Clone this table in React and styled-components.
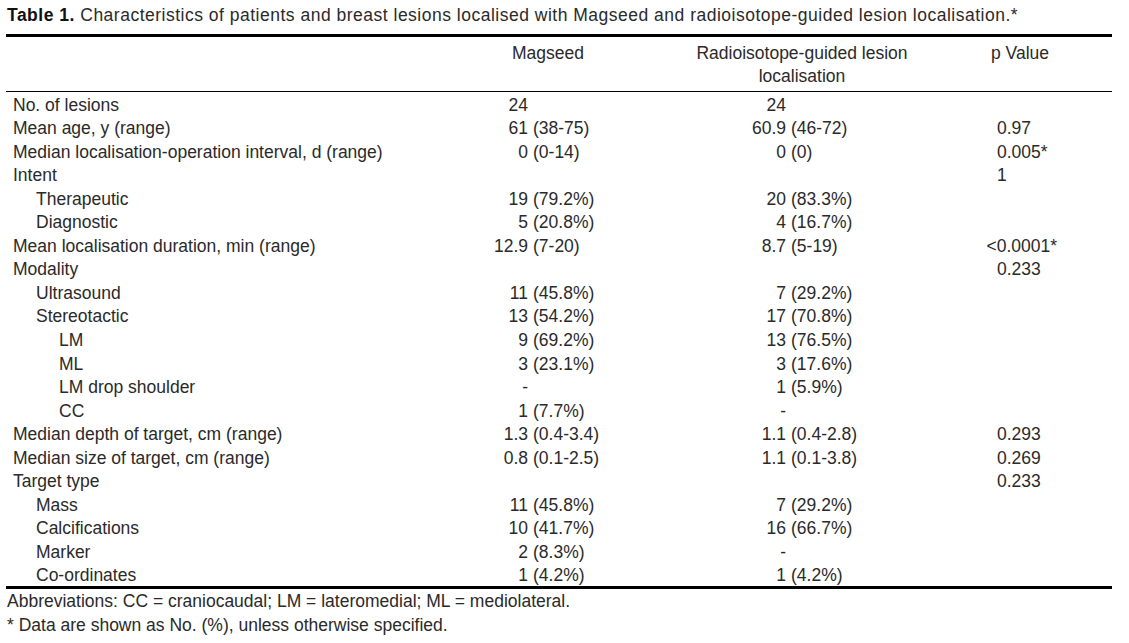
import React from "react";
import styled, { createGlobalStyle } from "styled-components";

const GlobalStyle = createGlobalStyle`
  html, body {
    margin: 0;
    padding: 0;
    background: #ffffff;
  }
  body {
    font-family: "Liberation Sans", Arial, sans-serif;
    color: #2a2a2a;
  }
`;

const Page = styled.div`
  width: 1106px;
  padding: 4px 0 0 6px;
  font-size: 17.5px;
`;

const Caption = styled.div`
  line-height: 23.5px;
  padding-left: 1px;
  margin-bottom: 6px;
  white-space: nowrap;
  letter-spacing: 0.5px;
  b {
    font-weight: 700;
    color: #111;
  }
`;

const Table = styled.div`
  border-top: 3px solid #000;
  border-bottom: 3px solid #000;
`;

const Row = styled.div`
  display: grid;
  grid-template-columns: 484px 192px 240px 190px;
  box-sizing: border-box;
  height: 23.55px;
  padding-top: 1.5px;
  line-height: 22px;
  white-space: nowrap;
`;

const Head = styled(Row)`
  height: auto;
  line-height: 23px;
  padding: 5px 0 3.5px;
  border-bottom: 1px solid #000;
`;

const HeadCell = styled.div`
  text-align: ${({ $align }) => $align || "left"};
  padding-left: ${({ $pad }) => $pad || 0}px;
`;

const Label = styled.div`
  padding-left: ${({ $level }) => 7 + $level * 23}px;
`;

const Value = styled.div`
  display: flex;
`;

const Num = styled.span`
  display: inline-block;
  width: ${({ $w }) => $w}px;
  text-align: right;
  flex: none;
`;

const Rest = styled.span`
  padding-left: 5px;
`;

const PCell = styled.div`
  padding-left: 75px;
`;

const Hang = styled.span`
  margin-left: -10.5px;
`;

const Notes = styled.div`
  line-height: 23.4px;
  padding: 1px 0 0 1px;
`;

const rows = [
  { label: "No. of lesions", level: 0, a: ["24"], b: ["24"] },
  { label: "Mean age, y (range)", level: 0, a: ["61", "(38-75)"], b: ["60.9", "(46-72)"], p: "0.97" },
  { label: "Median localisation-operation interval, d (range)", level: 0, a: ["0", "(0-14)"], b: ["0", "(0)"], p: "0.005*" },
  { label: "Intent", level: 0, p: "1" },
  { label: "Therapeutic", level: 1, a: ["19", "(79.2%)"], b: ["20", "(83.3%)"] },
  { label: "Diagnostic", level: 1, a: ["5", "(20.8%)"], b: ["4", "(16.7%)"] },
  { label: "Mean localisation duration, min (range)", level: 0, a: ["12.9", "(7-20)"], b: ["8.7", "(5-19)"], p: "<0.0001*", hang: true },
  { label: "Modality", level: 0, p: "0.233" },
  { label: "Ultrasound", level: 1, a: ["11", "(45.8%)"], b: ["7", "(29.2%)"] },
  { label: "Stereotactic", level: 1, a: ["13", "(54.2%)"], b: ["17", "(70.8%)"] },
  { label: "LM", level: 2, a: ["9", "(69.2%)"], b: ["13", "(76.5%)"] },
  { label: "ML", level: 2, a: ["3", "(23.1%)"], b: ["3", "(17.6%)"] },
  { label: "LM drop shoulder", level: 2, a: ["-"], b: ["1", "(5.9%)"] },
  { label: "CC", level: 2, a: ["1", "(7.7%)"], b: ["-"] },
  { label: "Median depth of target, cm (range)", level: 0, a: ["1.3", "(0.4-3.4)"], b: ["1.1", "(0.4-2.8)"], p: "0.293" },
  { label: "Median size of target, cm (range)", level: 0, a: ["0.8", "(0.1-2.5)"], b: ["1.1", "(0.1-3.8)"], p: "0.269" },
  { label: "Target type", level: 0, p: "0.233" },
  { label: "Mass", level: 1, a: ["11", "(45.8%)"], b: ["7", "(29.2%)"] },
  { label: "Calcifications", level: 1, a: ["10", "(41.7%)"], b: ["16", "(66.7%)"] },
  { label: "Marker", level: 1, a: ["2", "(8.3%)"], b: ["-"] },
  { label: "Co-ordinates", level: 1, a: ["1", "(4.2%)"], b: ["1", "(4.2%)"] },
];

const Cell = ({ v, w }) => (
  <Value>
    {v && <Num $w={w}>{v[0]}</Num>}
    {v && v[1] && <Rest>{v[1]}</Rest>}
  </Value>
);

export default function App() {
  return (
    <Page>
      <GlobalStyle />
      <Caption>
        <b>Table 1.</b> Characteristics of patients and breast lesions localised with Magseed and
        radioisotope-guided lesion localisation.*
      </Caption>
      <Table>
        <Head>
          <HeadCell />
          <HeadCell $pad={22}>Magseed</HeadCell>
          <HeadCell $align="center">
            Radioisotope-guided lesion
            <br />
            localisation
          </HeadCell>
          <HeadCell $pad={69}>p Value</HeadCell>
        </Head>
        <div>
          {rows.map((r) => (
            <Row key={r.label}>
              <Label $level={r.level}>{r.label}</Label>
              <Cell v={r.a} w={38} />
              <Cell v={r.b} w={104} />
              <PCell>{r.hang ? <Hang>{r.p}</Hang> : r.p}</PCell>
            </Row>
          ))}
        </div>
      </Table>
      <Notes>
        Abbreviations: CC = craniocaudal; LM = lateromedial; ML = mediolateral.
        <br />* Data are shown as No. (%), unless otherwise specified.
      </Notes>
    </Page>
  );
}
